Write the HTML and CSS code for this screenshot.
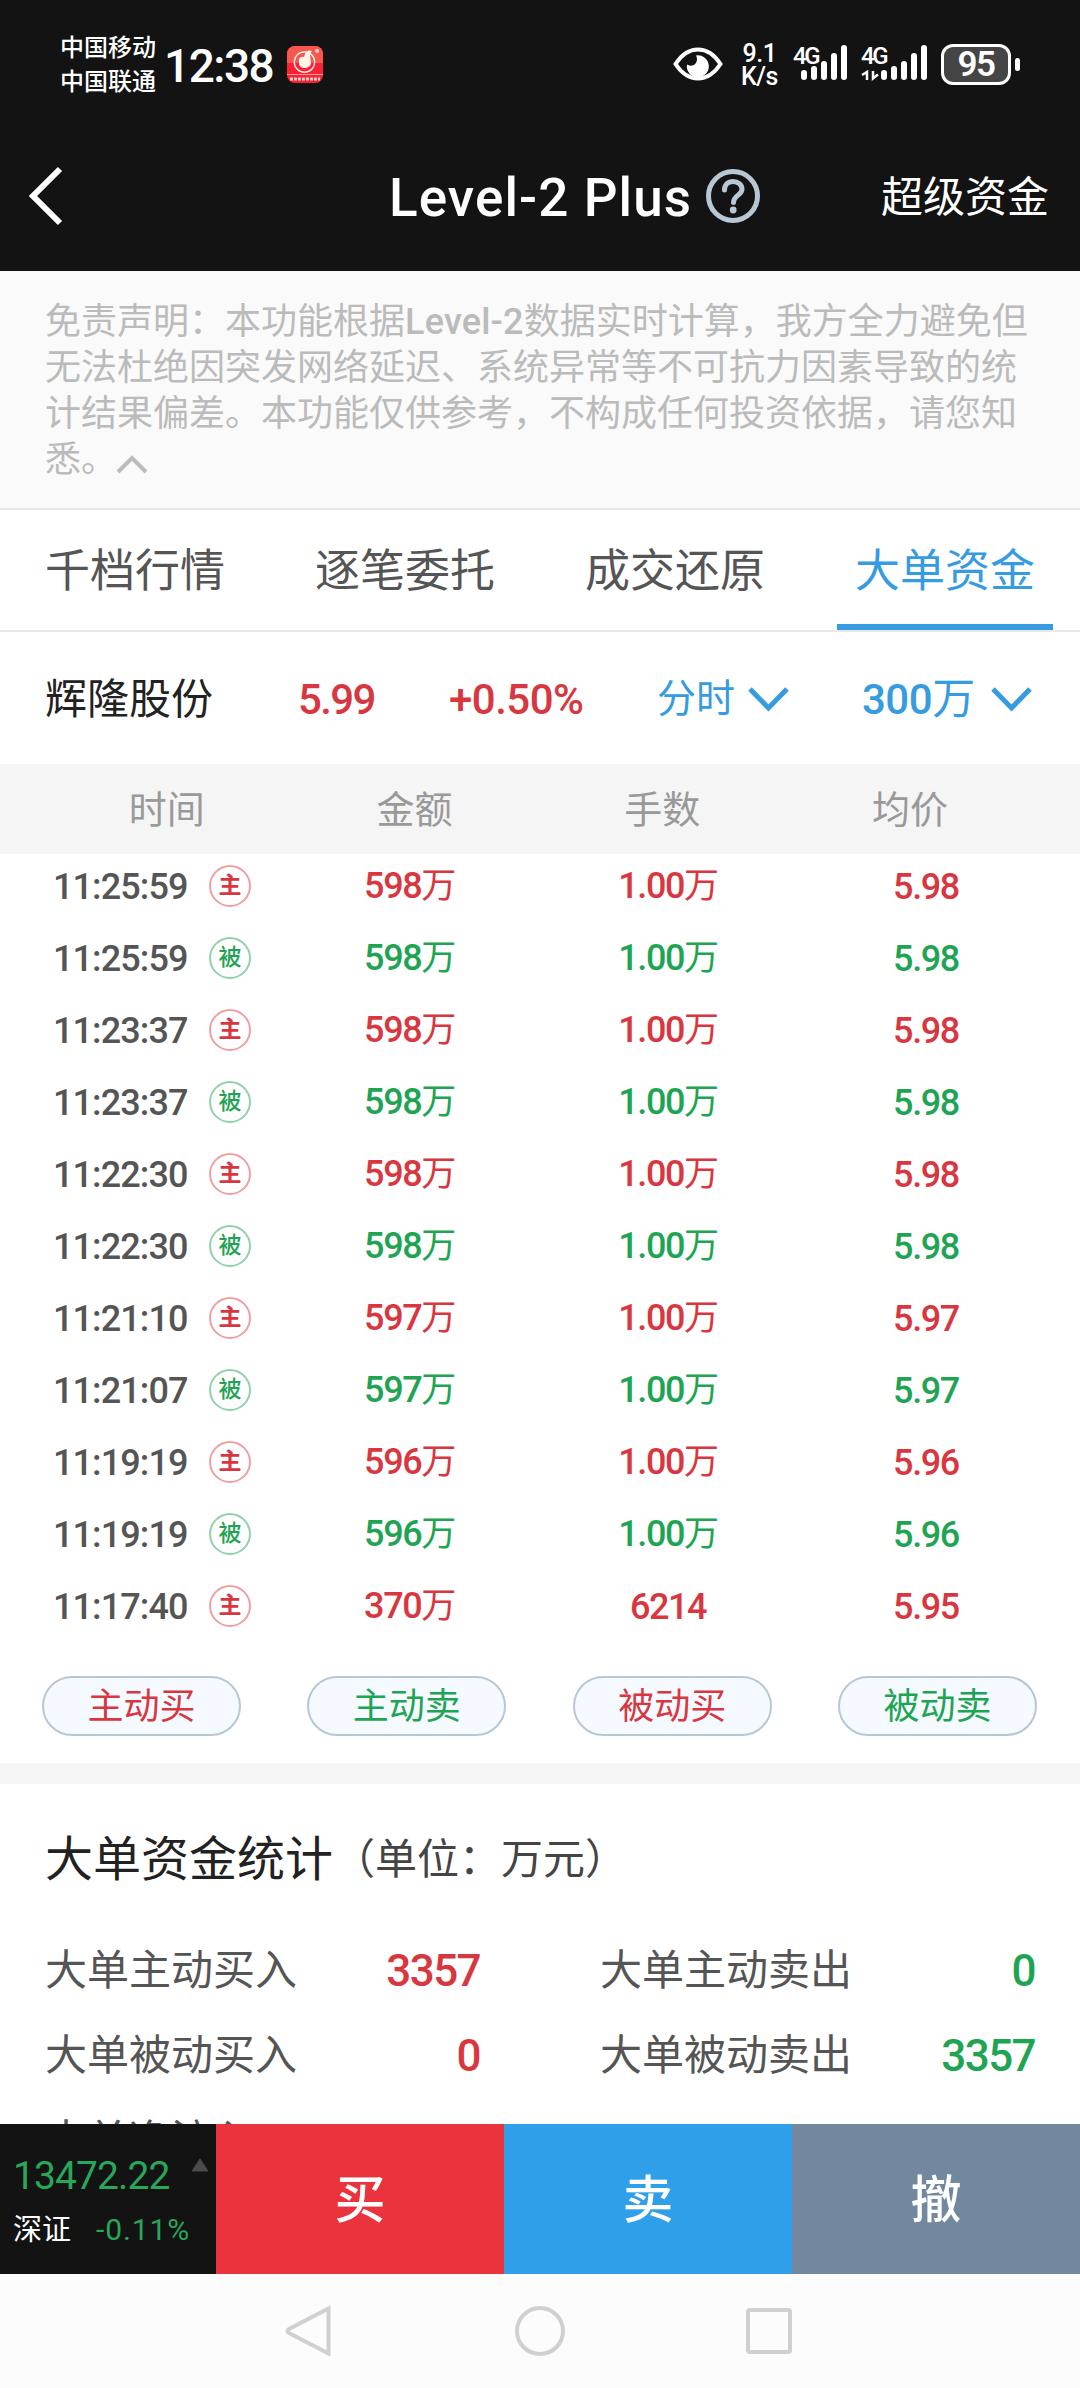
FILE: index.html
```
<!DOCTYPE html>
<html lang="zh-CN">
<head>
  <meta charset="UTF-8">
  <meta name="viewport" content="width=device-width, initial-scale=1.0">
  <title>Level-2 Plus</title>
  <link rel="stylesheet" href="styles.css">
</head>
<body>
  <div class="app">
    <!-- 状态栏 -->
    <div class="status-bar">
      <div class="carrier">中国移动<br>中国联通</div>
      <div class="clock">12:38</div>
      <svg class="app-icon" width="36" height="37" viewBox="0 0 36 37">
        <rect width="36" height="37" rx="8" fill="#fa2334"/>
        <path d="M0 8a8 8 0 0 1 8-8h20a8 8 0 0 1 8 8v9H0z" fill="#f9564c"/>
        <circle cx="17.5" cy="16" r="10.2" fill="none" stroke="#fff" stroke-width="1.2"/>
        <path d="M12 13q2-3 5-2l1-3q2-5 7-3l-2 3 1 10q-2 4-6 4-6 0-6-5z" fill="#fff4ec"/>
        <circle cx="30" cy="5" r="2" fill="#ffd5ce"/>
        <path d="M0 28.5h36" stroke="#ff9a94"/>
        <path d="M3 33h30" stroke="#ffc9c5" stroke-width="3" stroke-dasharray="3 1"/>
      </svg>
      <svg class="eye" width="50" height="34" viewBox="0 0 50 34">
        <path d="M2.5 17Q12 2.5 25 2.5T47.5 17Q38 31.5 25 31.5T2.5 17z" fill="none" stroke="#fff" stroke-width="4"/>
        <path d="M23 8.5a11 11 0 1 1-9 9q6 3 9-1.5 2-4 0-7.500z" fill="#fff"/>
      </svg>
      <div class="speed">9.1<br>K/s</div>
      <div class="signal">
        <span>4G</span>
        <svg width="36" height="38" viewBox="0 0 36 38" fill="none" stroke="#fff" stroke-width="6" stroke-linecap="round">
          <path d="M-7 29v4M3 25v8M13 20v13M23 12v21M33 4v29"/>
        </svg>
      </div>
      <div class="signal signal-data">
        <span>4G</span>
        <svg width="36" height="38" viewBox="0 0 36 38" fill="none" stroke="#fff" stroke-width="6" stroke-linecap="round">
          <path d="M-7 29v4M3 25v8M13 20v13M23 12v21M33 4v29"/>
          <path d="M-29 31l5-3v8M-18 27v7.500l5-4" stroke-width="2.5" stroke-linecap="butt"/>
        </svg>
      </div>
      <div class="battery">95</div>
    </div>

    <!-- 标题栏 -->
    <div class="nav-bar">
      <svg class="back" width="36" height="62" viewBox="0 0 36 62" fill="none" stroke="#fff" stroke-width="6">
        <path d="M32 4L5 31l27 27"/>
      </svg>
      <h1>Level-2 Plus</h1>
      <svg class="help" width="56" height="56" viewBox="0 0 56 56" fill="none" stroke="#b8c7d6" stroke-width="5">
        <circle cx="27" cy="28" r="24.5"/>
        <path d="M18.500 22c0-5 3.500-8.500 8.500-8.500s9 3.300 9 7.700c0 6-8.500 6-8.500 13.300" stroke-linecap="round"/>
        <circle cx="27.200" cy="42" r="3.400" fill="#b8c7d6" stroke="none"/>
      </svg>
      <span class="nav-link">超级资金</span>
    </div>

    <!-- 免责声明 -->
    <div class="notice">
      免责声明：本功能根据<span class="latin">Level-2</span>数据实时计算，我方全力避免但<br>
      无法杜绝因突发网络延迟、系统异常等不可抗力因素导致的统<br>
      计结果偏差。本功能仅供参考，不构成任何投资依据，请您知<br>
      悉。<svg width="32" height="20" viewBox="0 0 32 20" fill="none" stroke="#bbb" stroke-width="4"><path d="M1 20L15 6l14 14"/></svg>
    </div>

    <div class="tabs">
      <div class="tab">千档行情</div>
      <div class="tab">逐笔委托</div>
      <div class="tab">成交还原</div>
      <div class="tab active">大单资金</div>
    </div>

    <!-- 股票信息 -->
    <div class="stock">
      <span class="stock-name">辉隆股份</span>
      <span class="stock-price">5.99</span>
      <span class="stock-change">+0.50%</span>
      <span class="select period">分时</span>
      <svg class="arrow" width="42" height="26" viewBox="0 0 42 26"><path d="M2 2l18.500 19L39 2"/></svg>
      <span class="select amount">300<b>万</b></span>
      <svg class="arrow" width="42" height="26" viewBox="0 0 42 26"><path d="M2 2l18.500 19L39 2"/></svg>
    </div>

    <!-- 大单明细 -->
    <div class="table-head">
      <span>时间</span><span>金额</span><span>手数</span><span>均价</span>
    </div>
    <div class="table-body">
      <div class="row red"><span class="time">11:25:59</span><i>主</i><span>598<b>万</b></span><span>1.00<b>万</b></span><span>5.98</span></div>
      <div class="row green"><span class="time">11:25:59</span><i>被</i><span>598<b>万</b></span><span>1.00<b>万</b></span><span>5.98</span></div>
      <div class="row red"><span class="time">11:23:37</span><i>主</i><span>598<b>万</b></span><span>1.00<b>万</b></span><span>5.98</span></div>
      <div class="row green"><span class="time">11:23:37</span><i>被</i><span>598<b>万</b></span><span>1.00<b>万</b></span><span>5.98</span></div>
      <div class="row red"><span class="time">11:22:30</span><i>主</i><span>598<b>万</b></span><span>1.00<b>万</b></span><span>5.98</span></div>
      <div class="row green"><span class="time">11:22:30</span><i>被</i><span>598<b>万</b></span><span>1.00<b>万</b></span><span>5.98</span></div>
      <div class="row red"><span class="time">11:21:10</span><i>主</i><span>597<b>万</b></span><span>1.00<b>万</b></span><span>5.97</span></div>
      <div class="row green"><span class="time">11:21:07</span><i>被</i><span>597<b>万</b></span><span>1.00<b>万</b></span><span>5.97</span></div>
      <div class="row red"><span class="time">11:19:19</span><i>主</i><span>596<b>万</b></span><span>1.00<b>万</b></span><span>5.96</span></div>
      <div class="row green"><span class="time">11:19:19</span><i>被</i><span>596<b>万</b></span><span>1.00<b>万</b></span><span>5.96</span></div>
      <div class="row red"><span class="time">11:17:40</span><i>主</i><span>370<b>万</b></span><span>6214</span><span>5.95</span></div>
    </div>

    <div class="filters">
      <span class="pill red">主动买</span>
      <span class="pill green">主动卖</span>
      <span class="pill red">被动买</span>
      <span class="pill green">被动卖</span>
    </div>

    <!-- 大单资金统计 -->
    <div class="stats">
      <h2>大单资金统计<small>（单位：万元）</small></h2>
      <div class="stats-grid">
        <div class="stat red"><label>大单主动买入</label><span>3357</span></div>
        <div class="stat green"><label>大单主动卖出</label><span>0</span></div>
        <div class="stat red"><label>大单被动买入</label><span>0</span></div>
        <div class="stat green"><label>大单被动卖出</label><span>3357</span></div>
        <div class="stat red"><label>大单净流入</label><span>0</span></div>
      </div>
    </div>

    <!-- 底部交易栏 -->
    <div class="trade-bar">
      <div class="index">
        <div class="index-top">
          <span>13472.22</span>
          <svg width="18" height="14" viewBox="0 0 18 14"><path d="M9 1L17 13H1z" fill="#4a4a4a" stroke="#4a4a4a" stroke-linejoin="round"/></svg>
        </div>
        <div class="index-bottom"><em>深证</em><span>-0.11%</span></div>
      </div>
      <div class="btn buy">买</div>
      <div class="btn sell">卖</div>
      <div class="btn cancel">撤</div>
    </div>

    <div class="system-nav">
      <svg width="52" height="52" viewBox="0 0 52 52"><path d="M43.500 3.500v45L4 28q-3-2 0-4z"/></svg>
      <svg width="52" height="52" viewBox="0 0 52 52"><circle cx="26" cy="26" r="23"/></svg>
      <svg width="52" height="52" viewBox="0 0 52 52"><rect x="5" y="5" width="42" height="42" rx="2"/></svg>
    </div>
  </div>
</body>
</html>
```
FILE: styles.css
```
* {
  box-sizing: border-box;
}

body {
  margin: 0;
  font-family: Roboto, "Noto Sans CJK SC", sans-serif;
  background-color: #fff;
  color: #222;
}

svg {
  display: block;
  flex: none;
  overflow: visible;
}

b, i, em {
  font-weight: inherit;
  font-style: normal;
}

.app {
  width: 1080px;
  height: 2388px;
  overflow: hidden;
  display: flex;
  flex-direction: column;
  white-space: nowrap;
}

.app > div {
  flex: none;
}

.red {
  color: #d8373f;
}

.green {
  color: #1fa453;
}

/* status bar */
.status-bar {
  height: 120px;
  padding: 9px 59px 0 60px;
  background-color: #131313;
  color: #fff;
  display: flex;
  align-items: center;
}

.carrier {
  width: 104px;
  font-size: 24px;
  line-height: 34px;
  font-weight: 500;
}

.clock {
  width: 123px;
  padding-top: 2px;
  font-size: 46px;
  font-weight: 500;
  letter-spacing: -1.5px;
}

.eye {
  margin-left: 350px;
  margin-right: 18px;
  margin-top: -2px;
}

.speed {
  width: 37px;
  margin-right: 15px;
  font-size: 25px;
  line-height: 23px;
  font-weight: 500;
  letter-spacing: -0.5px;
  text-align: center;
}

.signal {
  width: 68px;
  height: 42px;
  display: flex;
}

.signal span {
  width: 18px;
  font-size: 24px;
  line-height: 24px;
  font-weight: 500;
  letter-spacing: -2.5px;
}

.signal-data {
  width: 80px;
}

.signal-data svg {
  margin-left: 12px;
}

.battery {
  position: relative;
  width: 70px;
  height: 41px;
  border: 3px solid #fff;
  border-radius: 12px;
  background-color: #454545;
  font-size: 35px;
  line-height: 36px;
  font-weight: 600;
  text-align: center;
  letter-spacing: -1.5px;
}

.battery::after {
  content: "";
  position: absolute;
  right: -12px;
  top: 11px;
  width: 5px;
  height: 13px;
  border-radius: 3px;
  background-color: #fff;
}

/* title */
.nav-bar {
  height: 151px;
  padding: 0 31px 0 28px;
  background-color: #131313;
  color: #fff;
  display: flex;
  align-items: center;
}

.nav-bar h1 {
  width: 317px;
  margin: 4px 0 0 325px;
  font-size: 53px;
  font-weight: 500;
  letter-spacing: 1.1px;
}

.nav-link {
  margin-left: auto;
  margin-top: -4px;
  font-size: 42px;
}

.notice {
  height: 239px;
  padding: 28px 45px 0;
  background-color: #fafafa;
  border-bottom: 2px solid #e8e8e8;
  color: #bbb;
  font-size: 36px;
  line-height: 46px;
}

.notice .latin {
  font-weight: 500;
  letter-spacing: 0.2px;
}

.notice svg {
  display: inline-block;
}

.tabs {
  height: 122px;
  padding: 0 27px;
  border-bottom: 2px solid #e8e8e8;
  display: flex;
  justify-content: space-between;
}

.tab {
  width: 216px;
  text-align: center;
  font-size: 45px;
  line-height: 124px;
  height: 120px;
  color: #555;
}

.tab.active {
  color: #369ce1;
  border-bottom: 6px solid #369ce1;
}

/* stock */
.stock {
  height: 132px;
  padding-left: 45px;
  display: flex;
  align-items: center;
  font-size: 42px;
  line-height: 60px;
  color: #d8373f;
}

.stock-name {
  width: 253px;
  margin-top: 3px;
  color: #222;
}

.stock-price {
  width: 151px;
  margin-top: 4px;
  font-weight: 500;
  letter-spacing: -1.6px;
}

.stock-change {
  width: 208px;
  margin-top: 4px;
  font-weight: 500;
  letter-spacing: -0.5px;
}

.select {
  color: #369ce1;
}

.period {
  width: 91px;
  margin-top: 2px;
  font-size: 39px;
}

.amount {
  width: 129px;
  margin-left: 72px;
  margin-top: 2px;
  font-weight: 500;
  letter-spacing: -0.5px;
}

.amount b {
  font-size: 43px;
  font-weight: 400;
}

.arrow {
  fill: none;
  stroke: #369ce1;
  stroke-width: 5;
  margin-top: 4px;
}

/* table */
.table-head {
  height: 90px;
  padding: 0 46px 0 43px;
  background-color: #f5f5f5;
  color: #999;
  display: grid;
  grid-template-columns: repeat(4, 1fr);
  text-align: center;
  font-size: 38px;
  line-height: 92px;
}

.table-body {
  height: 804px;
  overflow: hidden;
}

.row {
  height: 72px;
  padding-left: 53px;
  display: grid;
  grid-template-columns: 156px 71px 259px 258px 258px;
  align-items: center;
  text-align: center;
  font-size: 36px;
  line-height: 72px;
  font-weight: 500;
  letter-spacing: -1.4px;
}

.row:first-child {
  margin-top: -4px;
}

.row b {
  font-size: 35px;
  font-weight: 400;
}

.row .time {
  color: #555;
  text-align: left;
  letter-spacing: -0.9px;
}

.row i {
  width: 42px;
  height: 42px;
  margin-top: -2px;
  border: 2px solid #f0a0a4;
  border-radius: 50%;
  font-size: 23px;
  line-height: 38px;
  font-weight: 600;
  letter-spacing: 0;
}

.row.green i {
  border-color: #8fd3a8;
  font-weight: 500;
}

.filters {
  height: 105px;
  padding: 18px 43px 0 42px;
  display: flex;
  justify-content: space-between;
}

.pill {
  width: 199px;
  height: 60px;
  border: 2px solid #b8c7d6;
  border-radius: 30px;
  background-color: #f4faff;
  text-align: center;
  font-size: 36px;
  line-height: 58px;
}

/* stats */
.stats {
  height: 361px;
  border-top: 21px solid #f5f5f5;
  padding: 0 45px;
  overflow: hidden;
}

.stats h2 {
  margin: 0;
  padding-top: 40px;
  font-size: 48px;
  line-height: 72px;
  font-weight: 400;
}

.stats small {
  font-size: 42px;
  line-height: 1;
  vertical-align: 2px;
  color: #444;
}

.stats-grid {
  margin-top: 31px;
  display: grid;
  grid-template-columns: 435px 435px;
  column-gap: 120px;
  grid-auto-rows: 85px;
}

.stat {
  display: flex;
  justify-content: space-between;
  align-items: center;
  font-size: 44px;
  line-height: 60px;
  font-weight: 500;
  letter-spacing: -1.6px;
}

.stat span {
  margin-top: 3px;
}

.stat label {
  margin-top: 3px;
  color: #555;
  font-size: 42px;
  font-weight: 400;
  letter-spacing: 0;
}

/* trade */
.trade-bar {
  height: 150px;
  display: flex;
}

.index {
  width: 216px;
  padding: 29px 7px 0 13px;
  background-color: #131313;
  color: #28a75a;
}

.index-top {
  height: 46px;
  display: flex;
  justify-content: space-between;
  font-size: 39px;
  line-height: 46px;
  letter-spacing: -0.9px;
}

.index-top svg {
  margin-top: 5px;
}

.index-bottom {
  margin-top: 8px;
  display: flex;
  align-items: center;
  font-size: 30px;
  line-height: 46px;
  letter-spacing: 0.9px;
}

.index-bottom em {
  width: 83px;
  font-size: 29px;
  letter-spacing: 0;
  color: #fff;
}

.btn {
  width: 288px;
  text-align: center;
  font-size: 51px;
  line-height: 154px;
  font-weight: 500;
  color: #fff;
}

.buy {
  background-color: #ea333c;
}

.sell {
  background-color: #309fe9;
}

.cancel {
  background-color: #71889f;
}

.system-nav {
  height: 114px;
  padding: 0 285px;
  background-color: #fcfcfc;
  display: flex;
  justify-content: space-between;
  align-items: center;
}

.system-nav svg {
  fill: none;
  stroke: #d0d0d0;
  stroke-width: 4;
}
```
